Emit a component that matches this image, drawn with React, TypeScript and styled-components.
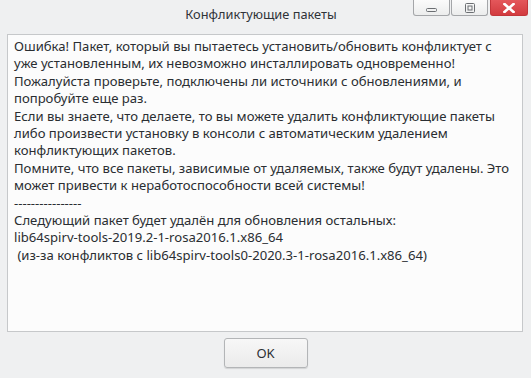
import React from "react";
import styled, { createGlobalStyle } from "styled-components";

const Global = createGlobalStyle`
  html, body { margin: 0; padding: 0; }
  body {
    background: #eff0f1;
    font-family: "Noto Sans", "Open Sans", sans-serif;
    color: #31363b;
  }
`;

const Window = styled.div`
  width: 531px;
  height: 378px;
  display: flex;
  flex-direction: column;
  background: #eff0f1;
  box-sizing: border-box;
`;

const TitleBar = styled.div`
  height: 34px;
  display: grid;
  grid-template-columns: 1fr auto 1fr;
  align-items: start;
  flex: none;
`;

const Title = styled.div`
  grid-column: 2;
  padding-top: 5px;
  margin-right: 9px;
  font-size: 12.8px;
  line-height: 18px;
  color: #2f3338;
`;

const Controls = styled.div`
  grid-column: 3;
  justify-self: end;
  display: flex;
  gap: 1px;
  margin-right: 3px;
`;

const CtlButton = styled.div<{ $close?: boolean }>`
  width: ${(p) => (p.$close ? "38px" : "37px")};
  height: 16px;
  box-sizing: border-box;
  border: 1px solid ${(p) => (p.$close ? "#c2363a" : "#a4a6a9")};
  border-top: none;
  border-radius: 0 0 3px 3px;
  margin-left: ${(p) => (p.$close ? "1px" : "0")};
  background: ${(p) =>
    p.$close
      ? "linear-gradient(#e4575b, #d23b3f)"
      : "linear-gradient(#fbfbfb, #eceded)"};
  display: flex;
  align-items: center;
  justify-content: center;
`;

const Content = styled.div`
  flex: 1;
  margin: 0 8px 0 7px;
  background: #fcfcfc;
  border: 1px solid #c6c8ca;
  padding: 3px 6px;
  font-size: 13.1px;
  line-height: 17.4px;
  color: #2a2e32;
  white-space: pre-wrap;
  overflow: hidden;
`;

const Footer = styled.div`
  flex: none;
  height: 46px;
  display: flex;
  justify-content: center;
  padding-top: 6px;
  box-sizing: border-box;
`;

const OkButton = styled.button`
  width: 84px;
  height: 30px;
  border: 1px solid #b3b5b7;
  border-radius: 3px;
  background: linear-gradient(#f7f7f7, #ebebeb);
  box-shadow: 0 1px 1px rgba(0, 0, 0, 0.12);
  font-family: "Noto Sans", "Open Sans", sans-serif;
  font-size: 13px;
  color: #2a2e32;
  padding: 0;
`;

const text = `Ошибка! Пакет, который вы пытаетесь установить/обновить конфликтует с
уже установленным, их невозможно инсталлировать одновременно!
Пожалуйста проверьте, подключены ли источники с обновлениями, и
попробуйте еще раз.
Если вы знаете, что делаете, то вы можете удалить конфликтующие пакеты
либо произвести установку в консоли с автоматическим удалением
конфликтующих пакетов.
Помните, что все пакеты, зависимые от удаляемых, также будут удалены. Это
может привести к неработоспособности всей системы!
----------------
Следующий пакет будет удалён для обновления остальных:
lib64spirv-tools-2019.2-1-rosa2016.1.x86_64
 (из-за конфликтов с lib64spirv-tools0-2020.3-1-rosa2016.1.x86_64)`;

export default function App() {
  return (
    <>
      <Global />
      <Window>
        <TitleBar>
          <Title>Конфликтующие пакеты</Title>
          <Controls>
            <CtlButton>
              <svg width="11" height="8" viewBox="0 0 11 8">
                <rect x="0.5" y="4.5" width="10" height="3" rx="1" fill="none" stroke="#6b6e72" />
              </svg>
            </CtlButton>
            <CtlButton>
              <svg width="10" height="10" viewBox="0 0 10 10">
                <rect x="0.5" y="0.5" width="9" height="9" rx="1" fill="none" stroke="#6b6e72" />
                <rect x="3" y="3" width="4" height="4" fill="none" stroke="#6b6e72" />
              </svg>
            </CtlButton>
            <CtlButton $close>
              <svg width="12" height="10" viewBox="0 0 12 10">
                <path d="M1.5 1 L10.5 9 M10.5 1 L1.5 9" stroke="#ffffff" strokeWidth="2.6" strokeLinecap="square" />
              </svg>
            </CtlButton>
          </Controls>
        </TitleBar>
        <Content>{text}</Content>
        <Footer>
          <OkButton>OK</OkButton>
        </Footer>
      </Window>
    </>
  );
}
